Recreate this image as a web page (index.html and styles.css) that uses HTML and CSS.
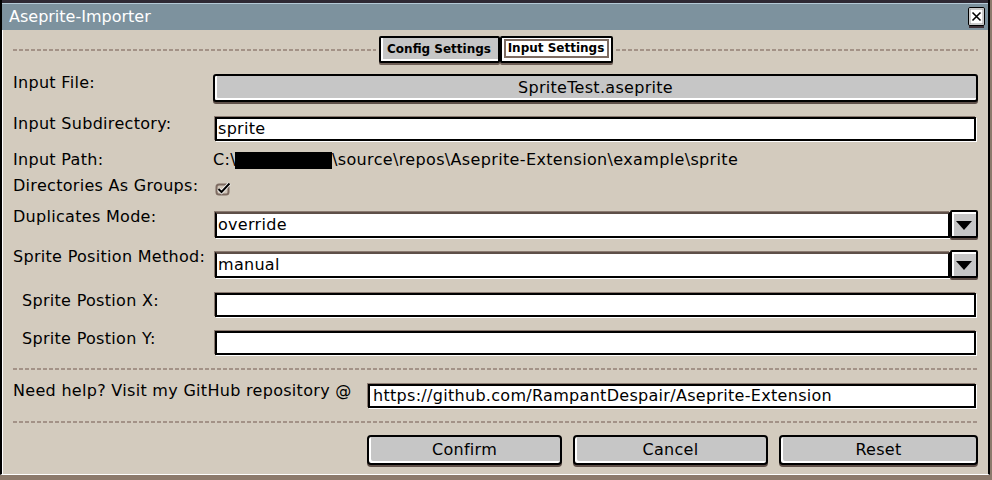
FILE: index.html
```html
<!DOCTYPE html>
<html lang="en">
<head>
<meta charset="utf-8">
<title>Aseprite-Importer</title>
<link rel="stylesheet" href="styles.css">
</head>
<body>
<div class="window">
  <div class="titlebar">
    <span class="title">Aseprite-Importer</span>
    <svg class="close" width="17" height="22" viewBox="0 0 17 22">
      <rect x="1" y="18" width="15" height="3" fill="#3d3035"/>
      <rect x="0.5" y="0.5" width="16" height="18" rx="1.5" fill="#fff" stroke="#000"/>
      <rect x="2" y="2" width="13" height="15" fill="none" stroke="#9a9a9a" stroke-width="1"/>
      <path d="M4.5 5.5 L12.5 13.5 M12.5 5.5 L4.5 13.5" stroke="#000" stroke-width="1.6"/>
    </svg>
  </div>
  <div class="main">
    <div class="tabs-row">
      <div class="dash"></div>
      <div class="tabs">
        <div class="tab tab-config">Config Settings</div>
        <div class="tab tab-input"><span class="focus">Input Settings</span></div>
      </div>
      <div class="dash"></div>
    </div>

    <div class="row row-file">
      <div class="label label-flush">Input File:</div>
      <div class="btn btn-file">SpriteTest.aseprite</div>
    </div>

    <div class="row row-subdir">
      <div class="label">Input Subdirectory:</div>
      <div class="entry">sprite</div>
    </div>

    <div class="row row-path">
      <div class="label label-flush">Input Path:</div>
      <div class="value">C:\<span class="redact"></span>\source\repos\Aseprite-Extension\example\sprite</div>
    </div>

    <div class="row row-groups">
      <div class="label label-flush">Directories As Groups:</div>
      <div class="value">
        <svg class="check" width="17" height="15" viewBox="0 0 17 15">
          <rect x="1.5" y="3.5" width="12" height="10" rx="2.5" fill="#cfc4b7" stroke="#7d6b61" stroke-width="2"/>
          <path d="M3.5 8 L6.5 11 L14.5 2.5" fill="none" stroke="#fff" stroke-width="3.6"/>
          <path d="M3.5 8 L6.5 11 L14.5 2.5" fill="none" stroke="#000" stroke-width="2"/>
        </svg>
      </div>
    </div>

    <div class="row row-dup">
      <div class="label">Duplicates Mode:</div>
      <div class="combo">
        <div class="entry combo-entry">override</div>
        <div class="drop"><span class="arrow"></span></div>
      </div>
    </div>

    <div class="row row-method">
      <div class="label">Sprite Position Method:</div>
      <div class="combo">
        <div class="entry combo-entry">manual</div>
        <div class="drop"><span class="arrow"></span></div>
      </div>
    </div>

    <div class="row row-x">
      <div class="label label-sub">Sprite Postion X:</div>
      <div class="entry"></div>
    </div>

    <div class="row row-y">
      <div class="label label-sub">Sprite Postion Y:</div>
      <div class="entry"></div>
    </div>

    <div class="dash sep sep-1"></div>

    <div class="row row-help">
      <div class="label">Need help? Visit my GitHub repository @</div>
      <div class="entry entry-url">https://github.com/RampantDespair/Aseprite-Extension</div>
    </div>

    <div class="dash sep sep-2"></div>

    <div class="actions">
      <div class="btn btn-action">Confirm</div>
      <div class="btn btn-action">Cancel</div>
      <div class="btn btn-action">Reset</div>
    </div>
  </div>
</div>
</body>
</html>
```

FILE: styles.css
```css
* {
  box-sizing: border-box;
  margin: 0;
  padding: 0;
}

html, body {
  width: 992px;
  height: 480px;
  overflow: hidden;
  background: #8c7a6c;
}

body {
  font-family: "DejaVu Sans", "Verdana", sans-serif;
  font-size: 16px;
  line-height: 18px;
  letter-spacing: 0.3px;
  color: #000;
}

.window {
  width: 990px;
  height: 475px;
  display: flex;
  flex-direction: column;
  background: #d3cbbe;
  border-left: 2px solid #000;
  border-right: 2px solid #000;
  border-bottom: 1px solid #fff;
}

.titlebar {
  height: 30px;
  flex: none;
  display: flex;
  align-items: flex-start;
  justify-content: space-between;
  background: #7d929e;
  border-top: 3px solid #2e2933;
  box-shadow: inset 0 1px 0 #b4c9d6;
  padding: 0 3px 0 7px;
  color: #fff;
}

.title {
  font-size: 16px;
  line-height: 20px;
  letter-spacing: 0;
  margin-top: 4px;
}

.close {
  margin-top: 4px;
  display: block;
}

.main {
  flex: 1;
  display: flex;
  flex-direction: column;
  padding: 0 10px 0 11px;
  box-shadow: inset 1px 0 0 #fff;
}

.dash {
  height: 2px;
  background: repeating-linear-gradient(90deg, #a39287 0 4px, transparent 4px 6px);
}

.tabs-row {
  margin-top: 6px;
  display: flex;
  align-items: center;
  height: 27px;
}

.tabs-row .dash {
  flex: 1;
  margin-top: 1px;
}

.tabs {
  display: flex;
  margin: 0 3px 0 3px;
}

.tab {
  height: 27px;
  border: 2px solid #000;
  border-radius: 2px;
  background: #c6c6c6;
  box-shadow: inset 2px -2px 0 #fff, 0 2px 0 #6e5e56;
  font-weight: bold;
  font-size: 12px;
  letter-spacing: 0;
  line-height: 23px;
  text-align: center;
  white-space: nowrap;
}

.tab-config {
  width: 121px;
}

.tab-input {
  width: 113px;
  background: #fff;
  box-shadow: 0 2px 0 #6e5e56;
  padding: 1px 2px;
}

.focus {
  display: block;
  height: 19px;
  line-height: 15px;
  border: 2px solid #7d6b61;
}

.row {
  display: grid;
  grid-template-columns: 200px 1fr;
  align-items: start;
  flex: none;
}

.label {
  margin-top: -2px;
  white-space: nowrap;
}

.label-flush {
  margin-top: 0;
}

.label-sub {
  padding-left: 9px;
  margin-top: -1px;
}

.row-file { margin-top: 11px; }
.row-subdir { margin-top: 15px; }
.row-path { margin-top: 10px; }
.row-groups { margin-top: 8px; }
.row-dup { margin-top: 15px; }
.row-method { margin-top: 10px; }
.row-x { margin-top: 13px; }
.row-y { margin-top: 14px; }
.sep-1 { margin-top: 13px; }
.row-help { margin-top: 14px; grid-template-columns: 355px 1fr; }
.sep-2 { margin-top: 13px; }

.btn {
  background: #c6c6c6;
  border: 2px solid #000;
  border-radius: 4px;
  box-shadow: inset 2px -2px 0 #fff, 0 2px 0 #5e4f48;
  text-align: center;
  white-space: nowrap;
}

.btn-file {
  height: 28px;
  line-height: 24px;
  border-radius: 3px;
}

.entry {
  height: 24px;
  margin: 0 2px;
  background: #fff;
  border: 2px solid #000;
  box-shadow: -1px -1px 0 #8a7a70, 1px 1px 0 #fff;
  line-height: 20px;
  padding: 0 2px 0 1px;
  white-space: nowrap;
  overflow: hidden;
}

.value {
  white-space: nowrap;
  display: flex;
  align-items: center;
  height: 18px;
  letter-spacing: 0.35px;
}

.redact {
  display: inline-block;
  width: 97px;
  height: 17px;
  background: #000;
  margin-left: -1px;
}

.check {
  display: block;
  margin-left: 2px;
  margin-top: 4px;
}

.combo {
  display: flex;
  align-items: flex-start;
  height: 30px;
}

.combo-entry {
  flex: 1;
  margin: 2px 0 0 2px;
  height: 26px;
  line-height: 22px;
  border-top-color: #5e4f48;
}

.drop {
  width: 28px;
  height: 28px;
  flex: none;
  border: 2px solid #000;
  border-radius: 2px;
  background: #c6c6c6;
  box-shadow: inset 2px 2px 0 #fff, 0 2px 0 #5e4f48;
  display: flex;
  align-items: center;
  justify-content: center;
}

.arrow {
  width: 0;
  height: 0;
  border-left: 8px solid transparent;
  border-right: 8px solid transparent;
  border-top: 9px solid #000;
  margin-top: 2px;
}

.entry-url {
  margin-left: 0;
  padding-left: 3px;
}

.actions {
  margin-top: 12px;
  margin-left: 354px;
  display: grid;
  grid-template-columns: 195px 195px 1fr;
  gap: 11px;
}

.btn-action {
  height: 30px;
  line-height: 26px;
}
```
